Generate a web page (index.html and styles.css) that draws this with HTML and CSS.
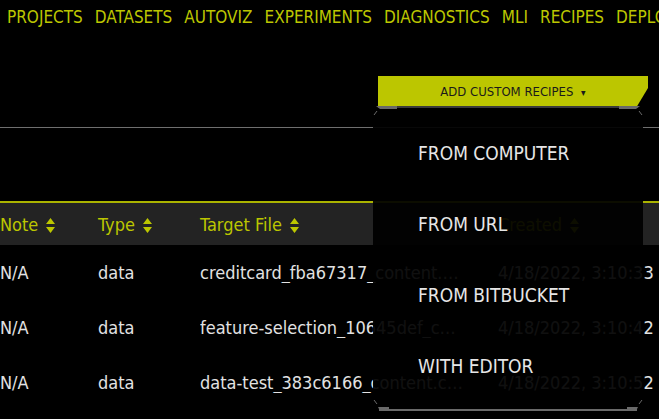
FILE: index.html
```html
<!DOCTYPE html>
<html>
<head>
    <title>Recipes</title>
    <link rel="stylesheet" href="styles.css">
</head>
<body>
    <nav class="topnav">
        <a>PROJECTS</a>
        <a>DATASETS</a>
        <a>AUTOVIZ</a>
        <a>EXPERIMENTS</a>
        <a>DIAGNOSTICS</a>
        <a>MLI</a>
        <a>RECIPES</a>
        <a>DEPLOYMENTS</a>
    </nav>

    <div class="toolbar">
        <div class="recipes">
            <button class="add-btn">ADD CUSTOM RECIPES <span class="caret">&#9662;</span></button>
            <div class="menu">
                <svg class="menu-frame" width="270" height="307" viewBox="0 0 270 307">
                    <rect x="5" y="0" width="260" height="2" fill="#3b3b3b"/>
                    <path d="M3 0 H24 V3 H7 Z" fill="#6a6a6a"/>
                    <path d="M246 0 H267 L263 3 H246 Z" fill="#6a6a6a"/>
                    <path d="M4 5 L1 9" stroke="#6a6a6a" stroke-width="1"/>
                    <path d="M266 5 L269 9" stroke="#6a6a6a" stroke-width="1"/>
                    <rect x="6" y="303" width="258" height="2" fill="#6a6a6a"/>
                    <path d="M5 301 H16 V305 H7 Z" fill="#6a6a6a"/>
                    <path d="M254 301 H265 L263 305 H254 Z" fill="#6a6a6a"/>
                    <path d="M1 294 L4 298" stroke="#6a6a6a" stroke-width="1"/>
                    <path d="M269 294 L266 298" stroke="#6a6a6a" stroke-width="1"/>
                </svg>
                <ul>
                    <li>FROM COMPUTER</li>
                    <li>FROM URL</li>
                    <li>FROM BITBUCKET</li>
                    <li>WITH EDITOR</li>
                </ul>
            </div>
        </div>
    </div>

    <table class="data-table">
        <thead>
            <tr>
                <th class="col-note">Note <svg class="sort" width="9" height="15" viewBox="0 0 9 15"><path d="M4.5 0 L9 6 H0 Z M0 9 H9 L4.5 15 Z" fill="#bcc600"/></svg></th>
                <th class="col-type">Type <svg class="sort" width="9" height="15" viewBox="0 0 9 15"><path d="M4.5 0 L9 6 H0 Z M0 9 H9 L4.5 15 Z" fill="#bcc600"/></svg></th>
                <th class="col-file">Target File <svg class="sort" width="9" height="15" viewBox="0 0 9 15"><path d="M4.5 0 L9 6 H0 Z M0 9 H9 L4.5 15 Z" fill="#bcc600"/></svg></th>
                <th class="col-created">Created <svg class="sort" width="9" height="15" viewBox="0 0 9 15"><path d="M4.5 0 L9 6 H0 Z M0 9 H9 L4.5 15 Z" fill="#bcc600"/></svg></th>
            </tr>
        </thead>
        <tbody>
            <tr>
                <td>N/A</td>
                <td>data</td>
                <td><div class="file">creditcard_fba67317_content.csv</div></td>
                <td>4/18/2022, 3:10:33</td>
            </tr>
            <tr>
                <td>N/A</td>
                <td>data</td>
                <td><div class="file">feature-selection_10645def_content.csv</div></td>
                <td>4/18/2022, 3:10:42</td>
            </tr>
            <tr>
                <td>N/A</td>
                <td>data</td>
                <td><div class="file">data-test_383c6166_content.csv</div></td>
                <td>4/18/2022, 3:10:52</td>
            </tr>
        </tbody>
    </table>
</body>
</html>
```

FILE: styles.css
```css
body {
    background-color: #000;
    color: #e2e2e2;
    font-family: "DejaVu Sans Condensed", "DejaVu Sans", sans-serif;
    margin: 0;
    width: 659px;
    height: 419px;
    overflow: hidden;
}

.topnav {
    display: flex;
    gap: 12px;
    height: 34px;
    align-items: center;
    padding-left: 7px;
    white-space: nowrap;
    overflow: hidden;
}

.topnav a {
    color: #bcc600;
    font-size: 17px;
}

.toolbar {
    position: relative;
    z-index: 2;
    display: flex;
    justify-content: flex-end;
    padding: 42px 11px 0 0;
    height: 51px;
    border-bottom: 1px solid #6f6f6f;
}

.recipes {
    position: relative;
    height: 30px;
}

.add-btn {
    width: 270px;
    height: 30px;
    background-color: #bcc600;
    color: #1a1a1a;
    border: none;
    font-family: inherit;
    font-size: 13px;
    clip-path: polygon(0 0, 100% 0, 100% 40%, 96% 100%, 0 100%);
    padding: 0;
}

.caret {
    font-size: 10px;
    margin-left: 4px;
}

.menu {
    position: absolute;
    top: 30px;
    left: -5px;
    width: 270px;
    height: 307px;
    background-color: rgba(0, 0, 0, 0.93);
}

.menu-frame {
    position: absolute;
    top: 0;
    left: 0;
}

.menu ul {
    list-style-type: none;
    margin: 12px 0 0;
    padding: 0;
}

.menu li {
    height: 71px;
    line-height: 71px;
    padding-left: 45px;
    font-size: 19px;
    color: #e6e6e6;
}

.data-table {
    position: relative;
    z-index: 1;
    border-collapse: collapse;
    margin-top: 73px;
    table-layout: fixed;
    width: 700px;
    font-size: 18px;
}

.data-table th {
    background-color: #232323;
    border-top: 2px solid #aab300;
    color: #bcc600;
    font-weight: normal;
    text-align: left;
    height: 42px;
    padding: 0;
    white-space: nowrap;
}

.data-table td {
    height: 55px;
    padding: 0;
    white-space: nowrap;
    color: #e2e2e2;
}

.sort {
    vertical-align: -2px;
    margin-left: 3px;
}

.col-note { width: 98px; }
.col-type { width: 102px; }
.col-file { width: 298px; }
.col-created { width: 202px; }

.file {
    width: 264px;
    overflow: hidden;
    text-overflow: ellipsis;
}
```
